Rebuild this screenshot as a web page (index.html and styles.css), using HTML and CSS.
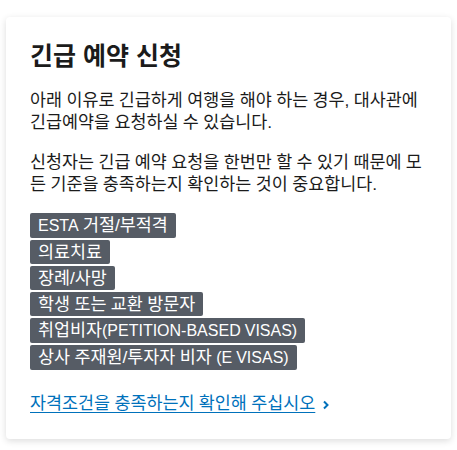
FILE: index.html
```html
<!DOCTYPE html>
<html lang="ko">
<head>
    <meta charset="UTF-8">
    <meta name="viewport" content="width=device-width, initial-scale=1.0">
    <title>긴급 예약 신청</title>
    <link rel="stylesheet" href="styles.css">
</head>
<body>

<div class="card">
    <h2>긴급 예약 신청</h2>
    <p>아래 이유로 긴급하게 여행을 해야 하는 경우, 대사관에 긴급예약을 요청하실 수 있습니다.</p>
    <p>신청자는 긴급 예약 요청을 한번만 할 수 있기 때문에 모든 기준을 충족하는지 확인하는 것이 중요합니다.</p>

    <div class="tags">
        <span class="tag"><span class="en">ESTA</span> 거절/부적격</span>
        <span class="tag">의료치료</span>
        <span class="tag">장례/사망</span>
        <span class="tag">학생 또는 교환 방문자</span>
        <span class="tag">취업비자<span class="en">(PETITION-BASED VISAS)</span></span>
        <span class="tag">상사 주재원/투자자 비자 <span class="en">(E VISAS)</span></span>
    </div>

    <a class="more-link" href="#">
        <span class="more-text">자격조건을 충족하는지 확인해 주십시오</span>
        <svg class="chevron" width="8" height="10" viewBox="0 0 8 10" aria-hidden="true">
            <path d="M2 1.5 L5.5 5 L2 8.5" fill="none" stroke="currentColor" stroke-width="2"/>
        </svg>
    </a>
</div>

</body>
</html>
```

FILE: styles.css
```css
body {
    font-family: "Liberation Sans", "Noto Sans CJK KR", sans-serif;
    margin: 0;
    padding: 17px 6px;
    background-color: #fff;
    color: #1b1b1b;
}
.card {
    background-color: #fff;
    border-radius: 4px;
    box-shadow: 0 2px 7px rgba(0, 0, 0, 0.14);
    padding: 24px 24px 25px;
}
h2 {
    margin: 0 0 18px;
    font-size: 25px;
    line-height: 30px;
    font-weight: bold;
}
p {
    margin: 0 0 18px;
    font-size: 17.4px;
    line-height: 22px;
    word-spacing: -0.4px;
    word-break: break-all;
}
.tags {
    display: flex;
    flex-direction: column;
    align-items: flex-start;
    gap: 2px;
    margin-bottom: 22px;
}
.tag {
    display: inline-block;
    background-color: #565c65;
    color: #fff;
    font-size: 17.4px;
    line-height: 22px;
    word-spacing: -0.4px;
    padding: 1px 8px;
    border-radius: 2px;
}
.en {
    font-size: 16px;
}
.more-link {
    display: inline-flex;
    align-items: center;
    gap: 7px;
    color: #0071bb;
    font-size: 17.4px;
    line-height: 22px;
    word-spacing: -0.4px;
    text-decoration: none;
}
.more-text {
    text-decoration: underline;
    text-underline-offset: 3px;
}
.chevron {
    margin-top: 3px;
}
```
